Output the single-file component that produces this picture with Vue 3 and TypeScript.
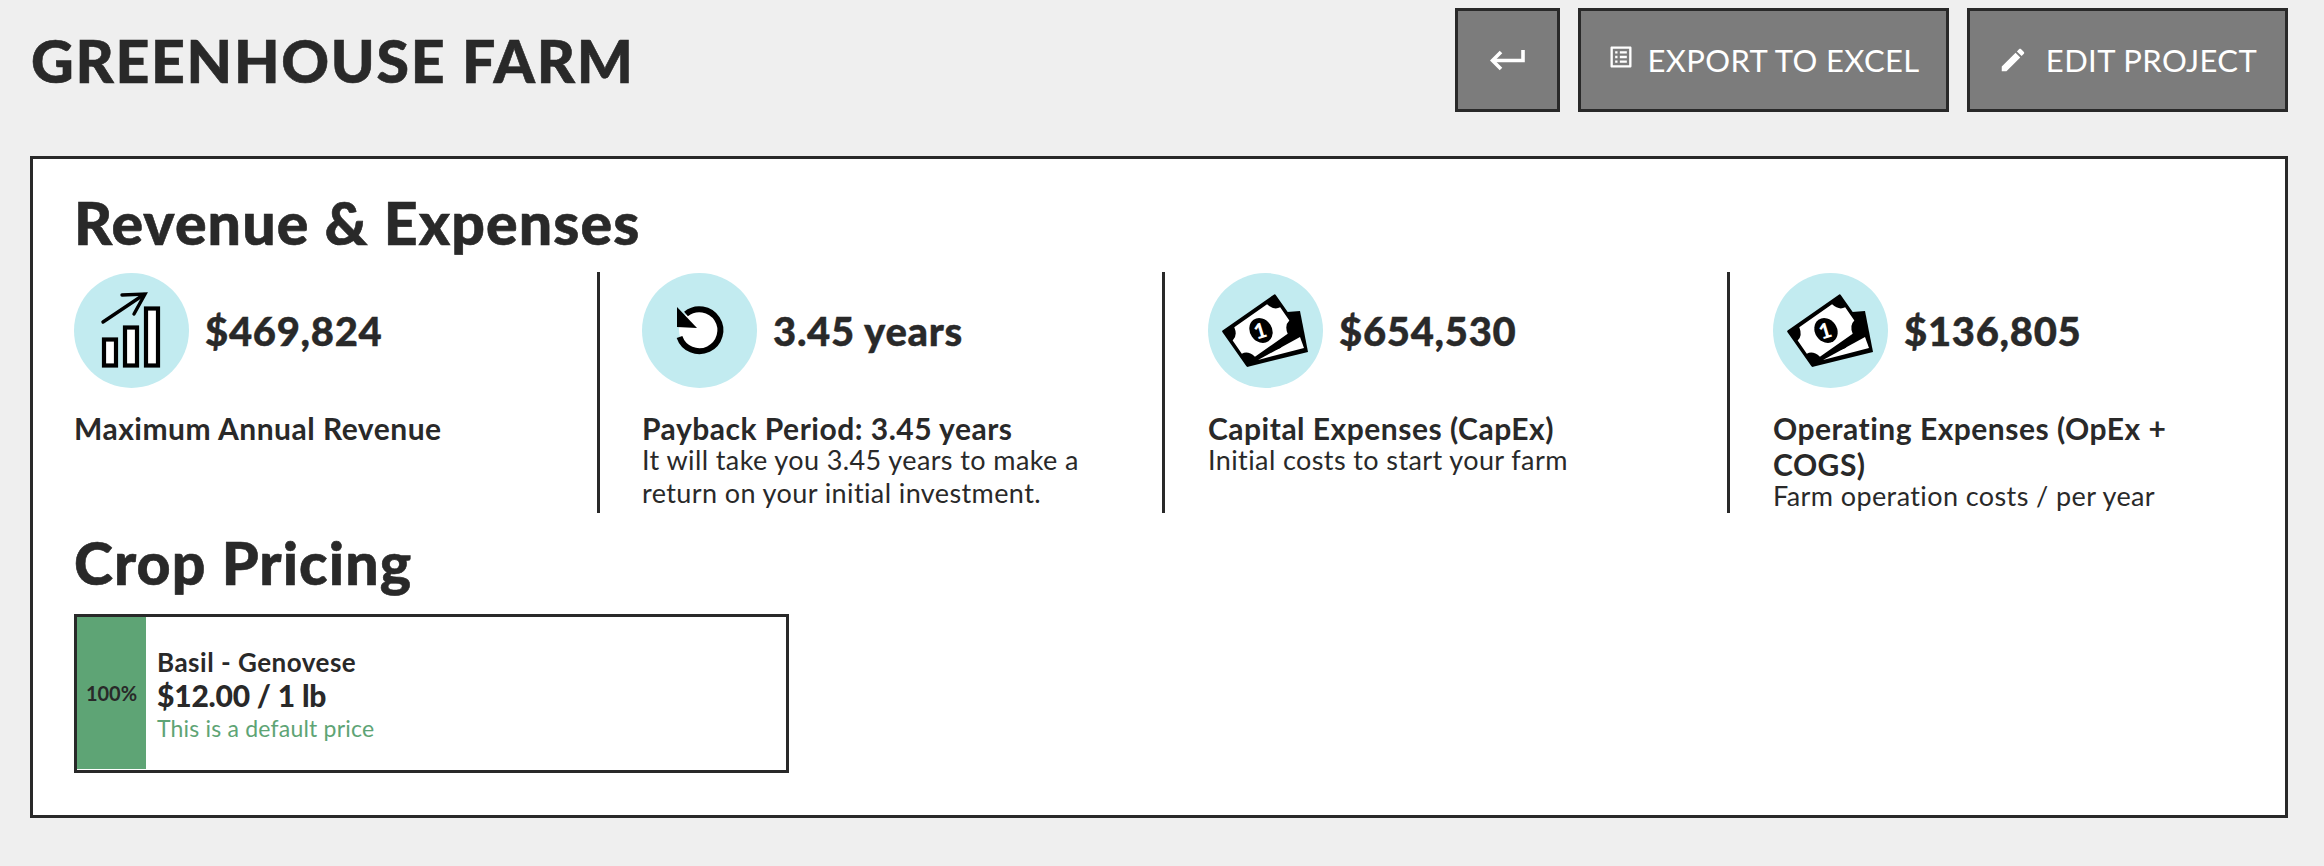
<script setup lang="ts">
interface Metric {
  value: string;
  label: string;
  note: string;
  icon: "chart" | "replay" | "money";
}

const metrics: Metric[] = [
  { value: "$469,824", label: "Maximum Annual Revenue", note: "", icon: "chart" },
  {
    value: "3.45 years",
    label: "Payback Period: 3.45 years",
    note: "It will take you 3.45 years to make a return on your initial investment.",
    icon: "replay",
  },
  { value: "$654,530", label: "Capital Expenses (CapEx)", note: "Initial costs to start your farm", icon: "money" },
  { value: "$136,805", label: "Operating Expenses (OpEx + COGS)", note: "Farm operation costs / per year", icon: "money" },
];
</script>

<template>
  <div class="page">
    <header class="header">
      <h1 class="title">GREENHOUSE FARM</h1>
      <div class="actions">
        <button class="btn btn-back" type="button" aria-label="Back">
          <svg width="35" height="22" viewBox="0 0 35 22" fill="none" stroke="#fff" stroke-width="3.6">
            <path d="M33 1V11.5H3" />
            <path d="M11 3L2.5 11.5L11 20" />
          </svg>
        </button>
        <button class="btn btn-export" type="button">
          <svg class="icon-export" width="28" height="28" viewBox="0 0 24 24" fill="#fff">
            <path d="M19 5v14H5V5h14m1.1-2H3.9c-.5 0-.9.4-.9.9v16.2c0 .4.4.9.9.9h16.2c.4 0 .9-.5.9-.9V3.9c0-.5-.5-.9-.9-.9zM11 7h6v2h-6V7zm0 4h6v2h-6v-2zm0 4h6v2h-6zM7 7h2v2H7zm0 4h2v2H7zm0 4h2v2H7z" />
          </svg>
          <span>EXPORT TO EXCEL</span>
        </button>
        <button class="btn btn-edit" type="button">
          <svg width="30" height="30" viewBox="0 0 24 24" fill="#fff">
            <path d="M3 17.25V21h3.75L17.81 9.94l-3.75-3.75L3 17.25zM20.71 7.04c.39-.39.39-1.02 0-1.41l-2.34-2.34c-.39-.39-1.02-.39-1.41 0l-1.83 1.83 3.75 3.75 1.83-1.83z" />
          </svg>
          <span>EDIT PROJECT</span>
        </button>
      </div>
    </header>

    <section class="panel">
      <h2 class="section-title">Revenue &amp; Expenses</h2>
      <div class="metrics">
        <article v-for="m in metrics" :key="m.value" class="metric">
          <div class="metric-top">
            <div class="circle">
              <svg v-if="m.icon === 'chart'" viewBox="0 0 115 115" width="115" height="115">
                <g fill="#fff" stroke="#000" stroke-width="4.2">
                  <rect x="30" y="66.5" width="12" height="26" />
                  <rect x="51" y="54.5" width="12" height="38" />
                  <rect x="72" y="35.5" width="12" height="57" />
                </g>
                <g fill="none" stroke="#000" stroke-width="3.4" stroke-linecap="round">
                  <path d="M29 49L70 21.5" />
                  <path d="M48 22L71 21L60 41" />
                </g>
              </svg>
              <svg v-else-if="m.icon === 'replay'" viewBox="0 0 115 115" width="115" height="115">
                <circle cx="58" cy="57" r="21" fill="#fff" />
                <path d="M37.5 64A21 21 0 1 0 44 41" fill="none" stroke="#000" stroke-width="6" />
                <path d="M35 34V54L55 55Z" fill="#000" />
              </svg>
              <svg v-else viewBox="0 0 115 115" width="115" height="115">
                <path d="M66 40L92 38L100 79L39 94Z" fill="#000" />
                <path d="M50 87L92 64L96 75Z" fill="#fff" />
                <ellipse cx="70" cy="74" rx="4" ry="2" fill="#000" transform="rotate(-25 70 74)" />
                <g transform="translate(53 57.5) rotate(-35)">
                  <rect x="-32.5" y="-22" width="65" height="44" rx="1" fill="#000" />
                  <path d="M-20 -18H20Q22 -9 29 -8V8Q22 9 20 18H-20Q-22 9 -29 8V-8Q-22 -9 -20 -18Z" fill="#fff" />
                  <ellipse cx="0" cy="0" rx="11" ry="13" fill="#000" />
                  <text x="-1" y="7.5" text-anchor="middle" class="bill-digit" transform="rotate(18)">1</text>
                </g>
              </svg>
            </div>
            <span class="value">{{ m.value }}</span>
          </div>
          <h3 class="label">{{ m.label }}</h3>
          <p v-if="m.note" class="note">{{ m.note }}</p>
        </article>
      </div>

      <h2 class="section-title pricing-title">Crop Pricing</h2>
      <div class="crop">
        <div class="share">100%</div>
        <div class="crop-body">
          <div class="crop-name">Basil - Genovese</div>
          <div class="crop-price">$12.00 / 1 lb</div>
          <div class="crop-note">This is a default price</div>
        </div>
      </div>
    </section>
  </div>
</template>

<style>
html,
body {
  margin: 0;
  background: #efefef;
}
</style>

<style scoped>
.page {
  box-sizing: border-box;
  width: 2324px;
  height: 866px;
  padding: 8px 36px 0 30px;
  background: #efefef;
  color: #292929;
  font-family: Lato, "Liberation Sans", sans-serif;
}

.header {
  display: flex;
  justify-content: space-between;
  align-items: flex-start;
  height: 148px;
}

.title {
  margin: 0;
  padding: 20px 0 0 1px;
  font-size: 59px;
  line-height: 66px;
  font-weight: 900;
  letter-spacing: 1.7px;
  -webkit-text-stroke: 0.6px #292929;
}

.actions {
  display: flex;
  gap: 18px;
}

.btn {
  box-sizing: border-box;
  display: flex;
  align-items: center;
  justify-content: center;
  height: 104px;
  border: 3px solid #292929;
  background: #7c7c7c;
  color: #fff;
  font-family: inherit;
  font-size: 31px;
  font-weight: 400;
  letter-spacing: 0.4px;
  padding: 0;
}

.btn-back {
  width: 105px;
}

.btn-export {
  width: 371px;
  gap: 12px;
}

.icon-export {
  margin-top: -6px;
}

.btn-edit {
  width: 321px;
  gap: 18px;
}

.panel {
  box-sizing: border-box;
  height: 662px;
  border: 3px solid #292929;
  background: #fff;
  padding: 26px 41px 0;
}

.section-title {
  margin: 0;
  font-size: 59px;
  line-height: 76px;
  font-weight: 900;
  letter-spacing: 1.1px;
  -webkit-text-stroke: 0.6px #292929;
}

.metrics {
  display: grid;
  grid-template-columns: 568px 565px 565px 1fr;
  grid-template-rows: 241px;
  margin: 11px -41px 0 -42px;
}

.metric {
  box-sizing: border-box;
  padding: 0 40px 0 42px;
  border-right: 3px solid #292929;
}

.metric:nth-child(n + 3) {
  padding-left: 43px;
}

.metric:last-child {
  border-right: 0;
  padding-right: 70px;
}

.metric-top {
  display: flex;
  align-items: center;
  gap: 16px;
  height: 115px;
  margin: 1px 0 22px;
}

.circle {
  flex: none;
  width: 115px;
  height: 115px;
  border-radius: 50%;
  background: #c2ebf0;
}

.circle svg {
  display: block;
}

.bill-digit {
  font-size: 21px;
  font-weight: 900;
  fill: #fff;
  font-family: Lato, sans-serif;
}

.value {
  font-size: 40px;
  font-weight: 900;
  letter-spacing: 0.7px;
  -webkit-text-stroke: 0.4px #292929;
}

.label {
  margin: 0;
  font-size: 30px;
  line-height: 36px;
  font-weight: 700;
  letter-spacing: 0.5px;
}

.note {
  margin: -3px 0 0;
  font-size: 27px;
  line-height: 33px;
  font-weight: 400;
  letter-spacing: 0.4px;
}

.pricing-title {
  margin-top: 12px;
}

.crop {
  box-sizing: border-box;
  display: flex;
  width: 715px;
  height: 159px;
  margin-top: 13px;
  border: 3px solid #292929;
}

.share {
  flex: none;
  display: flex;
  align-items: center;
  justify-content: center;
  width: 69px;
  height: 152px;
  background: #5ea475;
  font-size: 20px;
  font-weight: 700;
}

.crop-body {
  display: flex;
  flex-direction: column;
  justify-content: center;
  padding: 3px 0 0 11px;
}

.crop-name {
  font-size: 26px;
  line-height: 33px;
  font-weight: 700;
  letter-spacing: 0.5px;
}

.crop-price {
  font-size: 30px;
  line-height: 33px;
  font-weight: 900;
  letter-spacing: -0.2px;
}

.crop-note {
  font-size: 23px;
  line-height: 33px;
  letter-spacing: 0.2px;
  color: #5ea475;
}
</style>
